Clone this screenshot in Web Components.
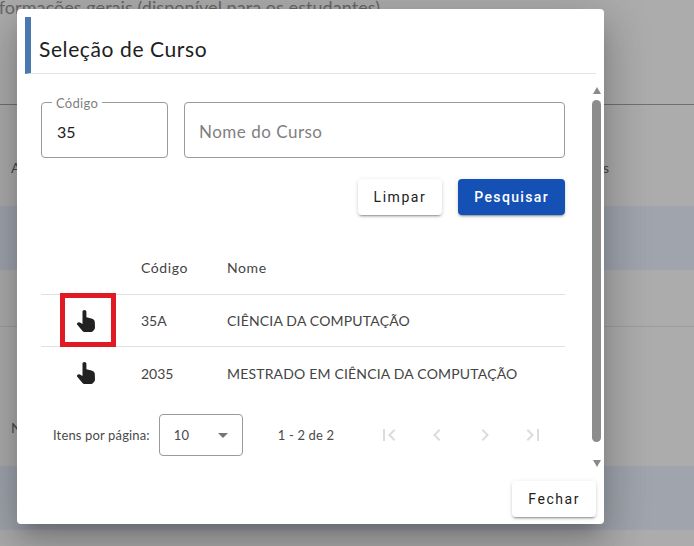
<!DOCTYPE html>
<html>
<head>
<meta charset="utf-8">
<style>
    html, body { margin: 0; height: 100%; overflow: hidden; }
    body { font-family: "Lato", "Liberation Sans", sans-serif; }
</style>
</head>
<body>
<page-backdrop>
    <course-dialog></course-dialog>
</page-backdrop>

<script>
const HAND = `<svg width="18" height="22" viewBox="0 0 18 22"><path fill="#212121" d="M5.500 1.800C5.500.7 6.300 0 7.400 0s2 .7 2 1.800v5.400l5 1.300c2 .5 3.300 1.700 3.400 3.500l.2 5.300c0 1-.3 1.900-1 2.600l-1.200 1.400c-.4.5-.9.7-1.500.7H7.200c-.6 0-1.100-.2-1.500-.7L.5 15c-.7-.7-.7-1.500-.2-2 .9-.9 2.500-.8 3.500-.1l1.700 1.200z"/></svg>`;

class PageBackdrop extends HTMLElement {
    connectedCallback() {
        this.attachShadow({ mode: 'open' });
        this.shadowRoot.innerHTML = `
            <style>
                :host { display: block; position: relative; width: 694px; height: 546px; overflow: hidden; background: #acacac; font-family: "Lato", sans-serif; color: #5e5e5e; }
                .title { position: absolute; right: 314px; top: -4px; font-size: 18px; letter-spacing: .05px; color: #666; white-space: nowrap; }
                .rule { position: absolute; left: 0; right: 0; top: 104px; height: 1px; background: #707070; }
                .band { position: absolute; left: 0; right: 0; background: #9fa4ad; }
                .line { position: absolute; left: 0; right: 0; height: 1px; background: #9c9c9c; }
                .txt { position: absolute; font-size: 14px; color: #4a4a4a; }
            </style>
            <div class="title">Informações gerais (disponível para os estudantes)</div>
            <div class="rule"></div>
            <div class="band" style="top:206px;height:64px"></div>
            <div class="line" style="top:326px"></div>
            <div class="band" style="top:466px;height:64px"></div>
            <span class="txt" style="left:11px;top:159px">A</span>
            <span class="txt" style="left:11px;top:419px">N</span>
            <span class="txt" style="left:603px;top:159px">s</span>
            <slot></slot>
        `;
    }
}

class CourseDialog extends HTMLElement {
    connectedCallback() {
        this.attachShadow({ mode: 'open' });
        this.shadowRoot.innerHTML = `
            <style>
                :host { display: flex; flex-direction: column; position: absolute; left: 17px; top: 9px; width: 587px; height: 515px; box-sizing: border-box; padding: 8px 8px 7px; background: #fff; border-radius: 4px; box-shadow: 0 11px 15px -7px rgba(0,0,0,.2), 0 24px 38px 3px rgba(0,0,0,.14), 0 9px 46px 8px rgba(0,0,0,.12); }
                header { height: 57px; box-sizing: border-box; display: flex; align-items: center; padding: 7px 0 0 8px; border-left: 6px solid #4a78b0; border-bottom: 1px solid #e3e6e8; font-size: 21px; letter-spacing: .6px; color: #212121; }
                .body { flex: 1; display: flex; min-height: 0; }
                .content { flex: 1; padding: 28px 27px 0 16px; min-width: 0; }
                .bar { width: 9px; margin-right: -5px; display: flex; flex-direction: column; align-items: center; padding-top: 13px; }
                .up { width: 0; height: 0; border: 4.5px solid transparent; border-top: 0; border-bottom: 7px solid #8a8a8a; }
                .thumb { width: 9px; height: 342px; margin: 6px 0 18px; background: #8c8c8c; border-radius: 5px; }
                .down { width: 0; height: 0; border: 4.5px solid transparent; border-bottom: 0; border-top: 7px solid #8a8a8a; }
                .fields { display: grid; grid-template-columns: 127px 1fr; gap: 16px; }
                .actions { display: flex; justify-content: flex-end; gap: 16px; margin-top: 21px; }
                footer { display: flex; justify-content: flex-end; }
            </style>
            <header>Seleção de Curso</header>
            <div class="body">
                <div class="content">
                    <div class="fields">
                        <outline-field label="Código" value="35"></outline-field>
                        <outline-field placeholder="Nome do Curso"></outline-field>
                    </div>
                    <div class="actions">
                        <raised-button>Limpar</raised-button>
                        <raised-button primary>Pesquisar</raised-button>
                    </div>
                    <course-table></course-table>
                    <table-pager></table-pager>
                </div>
                <div class="bar"><div class="up"></div><div class="thumb"></div><div class="down"></div></div>
            </div>
            <footer><raised-button>Fechar</raised-button></footer>
        `;
    }
}

class OutlineField extends HTMLElement {
    connectedCallback() {
        const label = this.getAttribute('label');
        const value = this.getAttribute('value');
        const placeholder = this.getAttribute('placeholder');
        this.attachShadow({ mode: 'open' });
        this.shadowRoot.innerHTML = `
            <style>
                :host { display: flex; align-items: center; position: relative; height: 56px; box-sizing: border-box; padding: 2px 14px 0 15px; border: 1px solid #9a9a9a; border-radius: 4px; font-size: 16px; color: #212121; }
                :host([placeholder]) { padding-left: 14px; }
                .label { position: absolute; left: 10px; top: -7px; padding: 0 4px; background: #fff; font-size: 13px; letter-spacing: .3px; line-height: 14px; color: #808080; }
                .ph { color: #808080; font-size: 17px; letter-spacing: .5px; }
            </style>
            ${label ? `<span class="label">${label}</span>` : ''}
            ${value ? `<span>${value}</span>` : `<span class="ph">${placeholder}</span>`}
        `;
    }
}

class RaisedButton extends HTMLElement {
    connectedCallback() {
        const primary = this.hasAttribute('primary');
        this.attachShadow({ mode: 'open' });
        this.shadowRoot.innerHTML = `
            <style>
                :host { display: inline-flex; align-items: center; justify-content: center; height: 36px; padding: 0 16px; border-radius: 4px; font-family: "Roboto", sans-serif; font-size: 14px; font-weight: ${primary ? 500 : 400}; letter-spacing: ${primary ? 1.35 : 1.55}px; background: ${primary ? '#1551b5' : '#fff'}; color: ${primary ? '#fff' : '#212121'}; box-shadow: 0 3px 1px -2px rgba(0,0,0,.2), 0 2px 2px 0 rgba(0,0,0,.14), 0 1px 5px 0 rgba(0,0,0,.12); }
            </style>
            <slot></slot>
        `;
    }
}

class CourseTable extends HTMLElement {
    connectedCallback() {
        const rows = [['35A', 'CIÊNCIA DA COMPUTAÇÃO', true], ['2035', 'MESTRADO EM CIÊNCIA DA COMPUTAÇÃO', false]];
        this.attachShadow({ mode: 'open' });
        this.shadowRoot.innerHTML = `
            <style>
                :host { display: block; margin-top: 25px; font-size: 14px; color: #444; }
                .row { display: grid; grid-template-columns: 100px 86px 1fr; align-items: center; height: 52px; border-bottom: 1px solid #e0e0e0; box-sizing: border-box; }
                .head { height: 55px; letter-spacing: .6px; }
                .name { letter-spacing: .18px; }
                .hand { display: flex; align-items: center; justify-content: center; }
                .hand svg { margin-left: -10px; }
                .mark { position: relative; }
                .mark::after { content: ""; position: absolute; left: 19px; top: -2px; width: 56px; height: 54px; box-sizing: border-box; border: 5px solid #e01b24; }
                .row:last-child { border-bottom: 0; }
            </style>
            <div class="row head"><span></span><span>Código</span><span>Nome</span></div>
            ${rows.map(r => `<div class="row ${r[2] ? 'mark' : ''}"><span class="hand">${HAND}</span><span>${r[0]}</span><span class="name">${r[1]}</span></div>`).join('')}
        `;
    }
}

class TablePager extends HTMLElement {
    connectedCallback() {
        const ic = d => `<svg width="24" height="24" viewBox="0 0 24 24" fill="#dcdcdc"><path d="${d}"/></svg>`;
        this.attachShadow({ mode: 'open' });
        this.shadowRoot.innerHTML = `
            <style>
                :host { display: flex; align-items: center; margin-top: 15px; padding-left: 12px; height: 42px; font-size: 13px; letter-spacing: .15px; color: #4a4a4a; }
                .size { display: flex; align-items: center; justify-content: space-between; box-sizing: border-box; width: 84px; height: 42px; margin: 0 35px 0 9px; padding: 0 14px; border: 1px solid #9a9a9a; border-radius: 4px; }
                .arrow { width: 0; height: 0; border: 5px solid transparent; border-bottom: 0; border-top: 5px solid #757575; }
                .nav { display: flex; gap: 24px; margin-left: 43px; }
            </style>
            <span>Itens por página:</span>
            <div class="size"><span>10</span><span class="arrow"></span></div>
            <span>1 - 2 de 2</span>
            <div class="nav">
                ${ic('M18.410 16.590 13.820 12l4.590-4.590L17 6l-6 6 6 6zM6 6h2v12H6z')}
                ${ic('M15.410 7.410 14 6l-6 6 6 6 1.410-1.410L10.830 12z')}
                ${ic('M10 6 8.590 7.410 13.170 12l-4.580 4.590L10 18l6-6z')}
                ${ic('M5.590 7.410 10.180 12l-4.590 4.590L7 18l6-6-6-6zM16 6h2v12h-2z')}
            </div>
        `;
    }
}

customElements.define('page-backdrop', PageBackdrop);
customElements.define('course-dialog', CourseDialog);
customElements.define('outline-field', OutlineField);
customElements.define('raised-button', RaisedButton);
customElements.define('course-table', CourseTable);
customElements.define('table-pager', TablePager);
</script>
</body>
</html>
